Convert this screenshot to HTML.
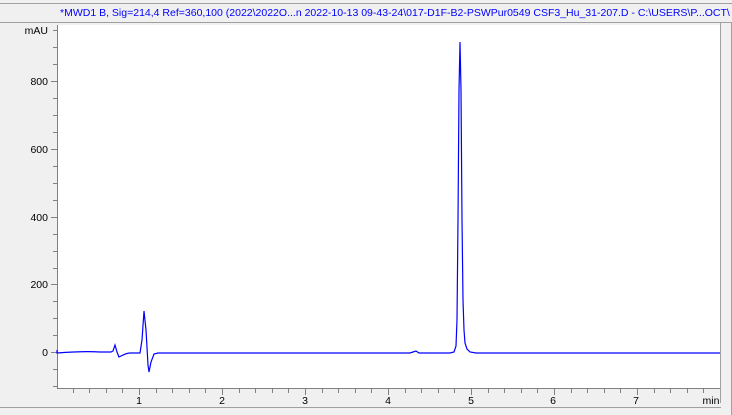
<!DOCTYPE html>
<html><head><style>
body{margin:0;width:732px;height:415px;background:#f0f0f0;overflow:hidden;font-family:"Liberation Sans",sans-serif}
</style></head><body>
<svg width="732" height="415" xmlns="http://www.w3.org/2000/svg" style="position:absolute;left:0;top:0">
<rect x="0" y="0" width="732" height="415" fill="#f0f0f0"/>
<line x1="0" y1="3.5" x2="732" y2="3.5" stroke="#a0a0a0"/>
<line x1="0" y1="22.5" x2="732" y2="22.5" stroke="#a0a0a0"/>
<text x="60" y="16" font-size="10.5" fill="#0000ff">*MWD1 B, Sig=214,4 Ref=360,100 (2022\2022O...n 2022-10-13 09-43-24\017-D1F-B2-PSWPur0549 CSF3_Hu_31-207.D - C:\USERS\P...OCT\</text>
<rect x="57" y="25" width="663" height="363" fill="#fff"/>
<line x1="57.5" y1="25" x2="57.5" y2="389" stroke="#808080"/>
<line x1="57" y1="388.5" x2="720" y2="388.5" stroke="#808080"/>
<line x1="720.5" y1="23" x2="720.5" y2="403" stroke="#a0a0a0"/>
<line x1="731.5" y1="23" x2="731.5" y2="415" stroke="#a0a0a0"/>
<line x1="0" y1="407.5" x2="721" y2="407.5" stroke="#a0a0a0"/>
<g stroke="#808080">
<line x1="53" y1="30.5" x2="57" y2="30.5"/>
<line x1="53" y1="47.5" x2="57" y2="47.5"/><line x1="53" y1="64.5" x2="57" y2="64.5"/><line x1="51" y1="81.5" x2="57" y2="81.5"/>
<line x1="53" y1="98.5" x2="57" y2="98.5"/><line x1="53" y1="115.5" x2="57" y2="115.5"/><line x1="53" y1="132.5" x2="57" y2="132.5"/><line x1="51" y1="149.5" x2="57" y2="149.5"/>
<line x1="53" y1="166.5" x2="57" y2="166.5"/><line x1="53" y1="183.5" x2="57" y2="183.5"/><line x1="53" y1="200.5" x2="57" y2="200.5"/><line x1="51" y1="217.5" x2="57" y2="217.5"/>
<line x1="53" y1="234.5" x2="57" y2="234.5"/><line x1="53" y1="251.5" x2="57" y2="251.5"/><line x1="53" y1="268.5" x2="57" y2="268.5"/><line x1="51" y1="284.5" x2="57" y2="284.5"/>
<line x1="53" y1="301.5" x2="57" y2="301.5"/><line x1="53" y1="318.5" x2="57" y2="318.5"/><line x1="53" y1="335.5" x2="57" y2="335.5"/><line x1="51" y1="352.5" x2="57" y2="352.5"/>
<line x1="53" y1="369.5" x2="57" y2="369.5"/><line x1="53" y1="386.5" x2="57" y2="386.5"/>
</g>
<g stroke="#808080" id="xt"></g>
<g font-size="10.5" fill="#000" text-anchor="end">
<text x="48" y="34">mAU</text>
<text x="48" y="85">800</text><text x="48" y="153">600</text><text x="48" y="221">400</text><text x="48" y="288">200</text><text x="48" y="356">0</text>
</g>
<g font-size="10.5" fill="#000" text-anchor="middle">
<text x="139" y="404">1</text><text x="222" y="404">2</text><text x="305" y="404">3</text><text x="388" y="404">4</text><text x="471" y="404">5</text><text x="553" y="404">6</text><text x="636" y="404">7</text><text x="711" y="404">min</text>
</g>
<path fill="none" stroke="#0000ff" stroke-width="1.2" d="M57,350 L57,353 C70,352 85,351 100,352 L111,352 L113,351 L115,345 L117,352 L119,357 C123,355 126,353 130,353 L140,353 L142,340 L144,311 L146,330 L148,365 L149,372 L151,362 L154,354 L158,353 L410,353 L413,352 L416,351 L419,353 L450,353 L454,352 L456,346 L457,320 L458,220 L459,90 L460,42 L461,90 L462,220 L463,300 L464,330 L465,343 L467,349 L470,352 L476,353 L720,353"/>
</svg>
<script>
var g=document.getElementById('xt'),s='';
for(var i=1;i<40;i++){var x=Math.round(56+i*83/5)+0.5;var major=i%5==0;s+='<line x1="'+x+'" y1="389" x2="'+x+'" y2="'+(major?395:393)+'"/>';}
g.innerHTML=s;
</script>
</body></html>
